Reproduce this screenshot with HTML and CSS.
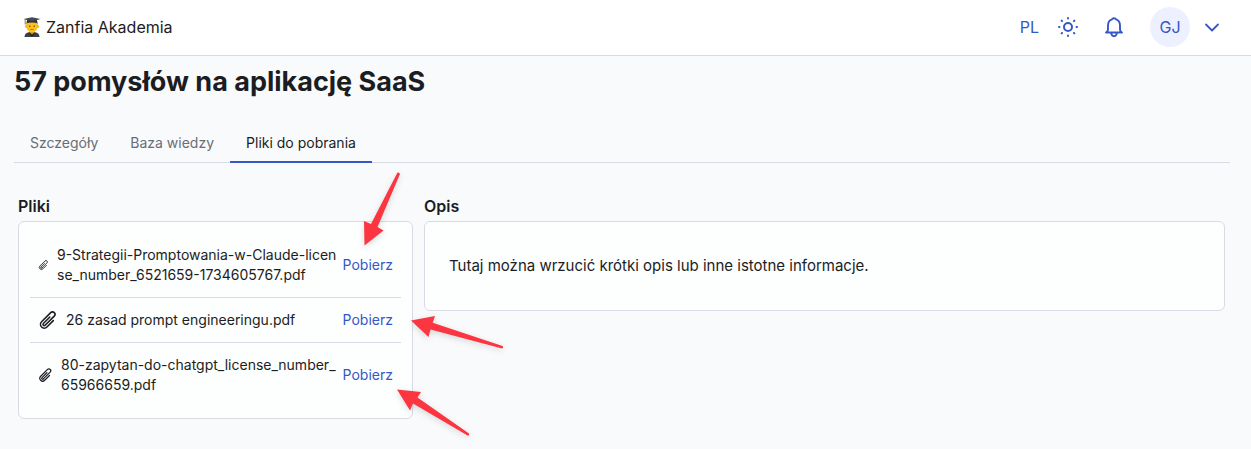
FILE: index.html
```html
<!DOCTYPE html>
<html lang="pl">
<head>
    <meta charset="UTF-8">
    <meta name="viewport" content="width=device-width, initial-scale=1.0">
    <title>Zanfia Akademia</title>
    <link rel="stylesheet" href="styles.css">
</head>
<body>
    <header class="navbar">
        <a href="#" class="logo">
            <svg class="logo-icon" viewBox="0 0 18 20" aria-hidden="true">
                <path d="M1.500 20c0-3.200 2-4.600 4.500-4.800h6c2.500.2 4.500 1.600 4.500 4.800z" fill="#3b4247"/>
                <path d="M6.500 13h5v2.500L9 17.500l-2.500-2z" fill="#e59600"/>
                <path d="M6 15.200l3 2.500 3-2.500.5 1L9 20l-3.500-3.800z" fill="#23282b"/>
                <circle cx="3.500" cy="9.500" r="1.400" fill="#f5a800"/>
                <circle cx="14.500" cy="9.500" r="1.400" fill="#f5a800"/>
                <path d="M3.600 5h10.800v5c0 3-2.400 5-5.400 5s-5.400-2-5.400-5z" fill="#fcc21b"/>
                <path d="M3.200 8V4.500h11.600V8l-1.300-2h-9z" fill="#b98a3a"/>
                <circle cx="6.800" cy="9.300" r=".7" fill="#4a3b24"/>
                <circle cx="11.200" cy="9.300" r=".7" fill="#4a3b24"/>
                <path d="M7.300 12.200q1.700 1 3.400 0" fill="none" stroke="#8a5418" stroke-width=".7"/>
                <path d="M4 3h10v3q-5-1.400-10 0z" fill="#2b3033"/>
                <path d="M9 .2l8.500 1.900L9 4.500.5 2.100z" fill="#434a4f"/>
                <path d="M2.200 2.500v5" stroke="#5f5548" stroke-width=".8"/>
            </svg>
            <span>Zanfia Akademia</span>
        </a>
        <div class="menu">
            <button class="lang-btn">PL</button>
            <button class="icon-btn theme-btn" aria-label="Motyw">
                <svg viewBox="0 0 24 24" width="24" height="24" fill="none" stroke="currentColor" stroke-width="2" stroke-linecap="round">
                    <circle cx="12" cy="12" r="4"/>
                    <path d="M12 3v.5M12 20.500v.5M3 12h.5M20.500 12h.5M5.600 5.600l.5.5M17.900 17.900l.5.5M5.600 18.400l.5-.5M17.900 6.100l.5-.5"/>
                </svg>
            </button>
            <button class="icon-btn bell-btn" aria-label="Powiadomienia">
                <svg viewBox="0 0 24 24" width="24" height="24" fill="none" stroke="currentColor" stroke-width="1.900" stroke-linecap="round" stroke-linejoin="round">
                    <path d="M4 17.500h16M4.500 17.300c1-.8 1.500-1.600 1.500-2.800V10.500c0-3 1.500-5.400 4-6.200.4-1.400 3.600-1.400 4 0 2.500.8 4 3.200 4 6.200v4c0 1.200.5 2 1.500 2.800M9.200 18c.2 2 1.200 3.200 2.800 3.200s2.600-1.200 2.800-3.200"/>
                </svg>
            </button>
            <button class="profile-btn">
                <span class="avatar">GJ</span>
                <svg viewBox="0 0 24 24" width="24" height="24" fill="none" stroke="currentColor" stroke-width="1.800" stroke-linecap="round" stroke-linejoin="round">
                    <path d="M6 9.500l6 6 6-6"/>
                </svg>
            </button>
        </div>
    </header>

    <main class="main">
        <h1>57 pomysłów na aplikację SaaS</h1>

        <nav class="tabs">
            <a href="#">Szczegóły</a>
            <a href="#">Baza wiedzy</a>
            <a href="#" class="active">Pliki do pobrania</a>
        </nav>

        <div class="content">
            <section class="files">
                <h2>Pliki</h2>
                <ul class="card file-list">
                    <li>
                        <svg class="clip clip-sm" viewBox="0 0 24 24"><use href="#paperclip"/></svg>
                        <span class="file-name">9-Strategii-Promptowania-w-Claude-license_number_6521659-1734605767.pdf</span>
                        <a href="#">Pobierz</a>
                    </li>
                    <li>
                        <svg class="clip" viewBox="0 0 24 24"><use href="#paperclip"/></svg>
                        <span class="file-name">26 zasad prompt engineeringu.pdf</span>
                        <a href="#">Pobierz</a>
                    </li>
                    <li>
                        <svg class="clip clip-md" viewBox="0 0 24 24"><use href="#paperclip"/></svg>
                        <span class="file-name">80-zapytan-do-chatgpt_license_number_65966659.pdf</span>
                        <a href="#">Pobierz</a>
                    </li>
                </ul>
            </section>

            <section class="description">
                <h2>Opis</h2>
                <div class="card description-card">
                    <p>Tutaj można wrzucić krótki opis lub inne istotne informacje.</p>
                </div>
            </section>
        </div>
    </main>

    <!-- arrows pointing at the download links -->
    <svg class="arrows" width="160" height="290" viewBox="355 160 160 290" aria-hidden="true">
        <path d="M397.500 172.500L371 224l-7-3L364.500 245.500 383.500 230.500l-6-3.500L400 174q-.5-2-2.500-1.500z"/>
        <path d="M411 320.500L435 316l-2.300 6.700L502.500 346q1.500 1.500-.5 2.500L430.500 329.500l-2 7.500z"/>
        <path d="M397 389.500L421 392l-3.500 5.500L469 433.500q.8 2-1.500 2L413 403.500l-3 7z"/>
    </svg>

    <svg class="symbols" aria-hidden="true">
        <symbol id="paperclip" viewBox="0 0 24 24">
            <path fill="none" stroke="currentColor" stroke-width="1.900" stroke-linecap="round" stroke-linejoin="round" d="M18.375 12.739l-7.693 7.693a4.500 4.500 0 01-6.364-6.364l10.940-10.940A3 3 0 1119.500 7.372L8.552 18.320m.009-.01l-.01.01m5.699-9.941l-7.810 7.810a1.500 1.500 0 002.112 2.130"/>
        </symbol>
    </svg>
</body>
</html>
```
FILE: styles.css
```css
* {
    margin: 0;
    padding: 0;
    box-sizing: border-box;
}

body {
    position: relative;
    min-height: 100vh;
    font-family: Inter, sans-serif;
    font-size: 16px;
    line-height: 24px;
    color: #1b1d22;
    background-color: #f9fafc;
}

a {
    color: #3657c8;
    text-decoration: none;
}

button {
    font: inherit;
    color: #3657c8;
    background: none;
    border: none;
    cursor: pointer;
}

svg {
    display: block;
    flex-shrink: 0;
}

.navbar {
    display: flex;
    justify-content: space-between;
    align-items: center;
    height: 56px;
    padding: 0 27px 2px 23px;
    background-color: #fff;
    border-bottom: 1px solid #d8dbe2;
}

.logo {
    display: flex;
    align-items: center;
    gap: 5px;
    color: #1b1d22;
}

.logo-icon {
    width: 18px;
    height: 20px;
}

.menu {
    display: flex;
    align-items: center;
}

.theme-btn {
    margin-left: 17px;
}

.bell-btn {
    margin-left: 22px;
}

.profile-btn {
    display: flex;
    align-items: center;
    gap: 10px;
    margin-left: 24px;
}

.avatar {
    width: 40px;
    height: 40px;
    line-height: 40px;
    text-align: center;
    border-radius: 50%;
    background-color: #edf1ff;
}

.main {
    padding: 8px 21px 0 14px;
}

h1 {
    font-size: 27px;
    line-height: 36px;
    font-weight: 700;
}

.tabs {
    display: flex;
    margin-top: 24px;
    font-size: 14px;
    border-bottom: 1px solid #d8dbe2;
}

.tabs a {
    padding: 8px 16px 7px;
    line-height: 22px;
    margin-bottom: -1px;
    color: #6a6d76;
    border-bottom: 2px solid transparent;
}

.tabs a.active {
    color: #1b1d22;
    border-bottom-color: #3657c8;
}

.content {
    display: grid;
    grid-template-columns: 395px 1fr;
    align-items: start;
    gap: 11px;
    padding: 31px 5px 0 4px;
}

h2 {
    font-size: 16px;
    line-height: 24px;
    font-weight: 600;
    margin-bottom: 3px;
}

.card {
    background-color: #fdfefe;
    border: 1px solid #d8dbe2;
    border-radius: 6px;
}

.file-list {
    padding: 11px;
    list-style: none;
    font-size: 14px;
    line-height: 20px;
}

.file-list li {
    display: flex;
    align-items: center;
    padding: 12px 8px;
}

.file-list li + li {
    border-top: 1px solid #d8dbe2;
}

.file-list a {
    margin-left: 4px;
}

.file-name {
    flex: 1;
    word-break: break-all;
}

.clip {
    width: 20px;
    height: 20px;
    margin-right: 8px;
}

.clip-sm {
    width: 11px;
}

.clip-md {
    width: 15px;
}

.description-card {
    padding: 32px 24px;
    font-size: 15px;
}

.arrows {
    position: absolute;
    top: 160px;
    left: 355px;
    fill: #fb3640;
    filter: drop-shadow(0 2px 3px rgba(0, 0, 0, 0.15));
    pointer-events: none;
}

.symbols {
    position: absolute;
    width: 0;
    height: 0;
}
```
